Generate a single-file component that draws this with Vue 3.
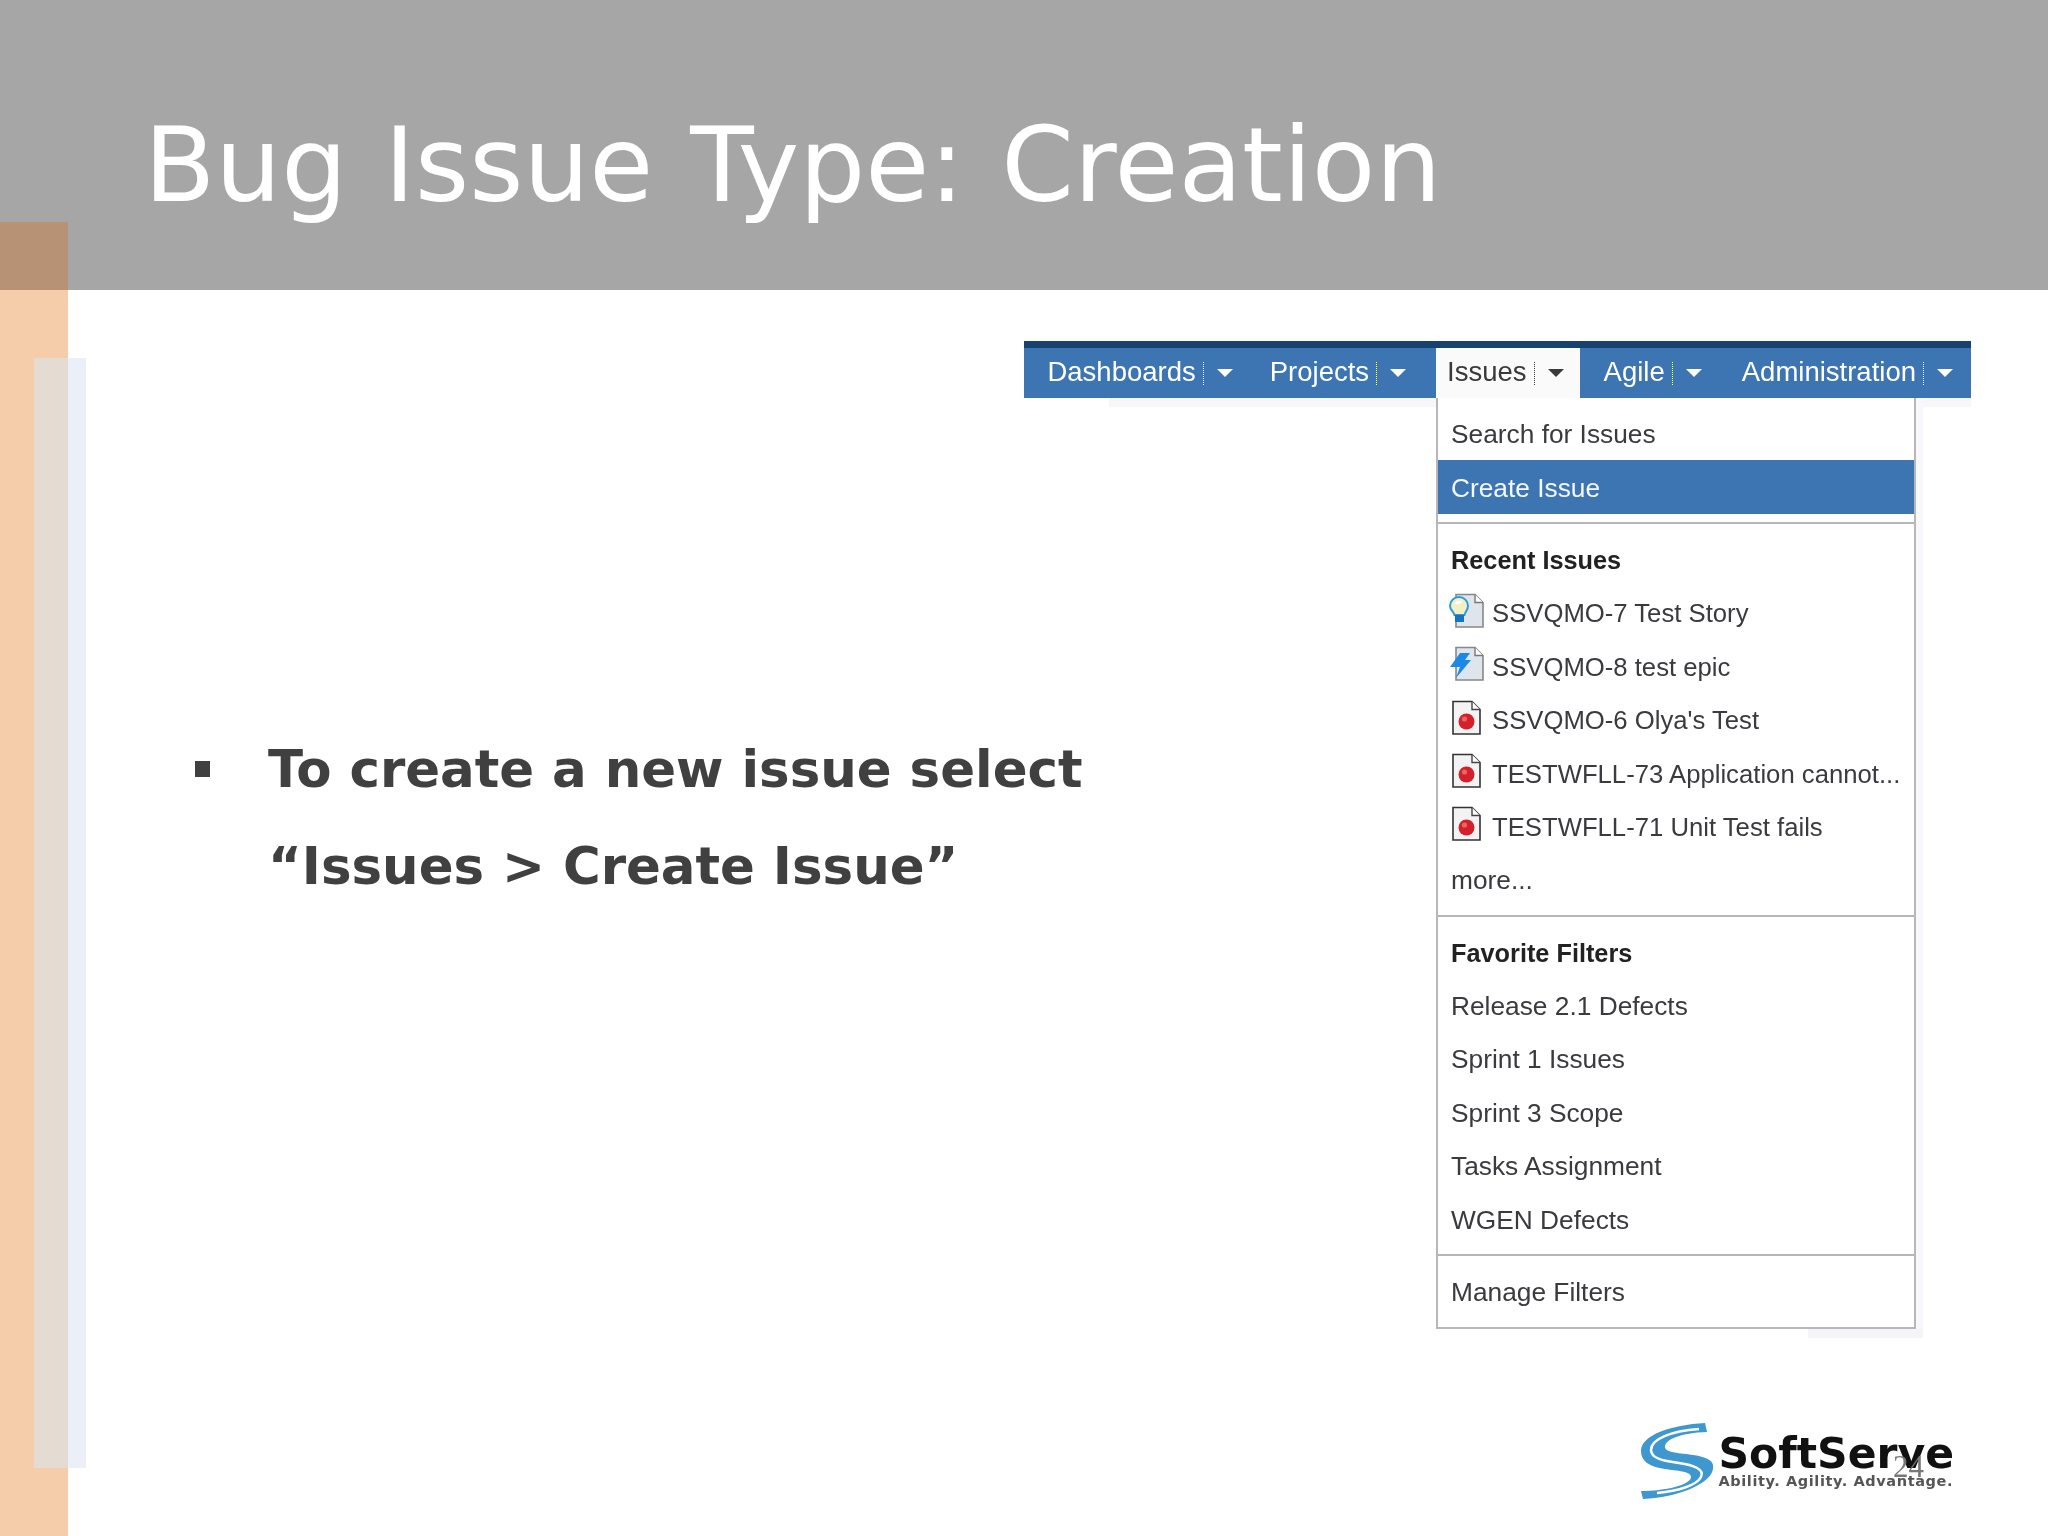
<script setup>
const tabs = [
  { name: 'Dashboards', cls: 'dash' },
  { name: 'Projects', cls: 'proj' },
  { name: 'Issues', cls: 'active' },
  { name: 'Agile', cls: 'agile' },
  { name: 'Administration', cls: 'admin' },
]
const recent = [
  { icon: 'story', text: 'SSVQMO-7 Test Story' },
  { icon: 'epic', text: 'SSVQMO-8 test epic' },
  { icon: 'bug', text: "SSVQMO-6 Olya's Test" },
  { icon: 'bug', text: 'TESTWFLL-73 Application cannot...' },
  { icon: 'bug', text: 'TESTWFLL-71 Unit Test fails' },
]
const filters = ['Release 2.1 Defects', 'Sprint 1 Issues', 'Sprint 3 Scope', 'Tasks Assignment', 'WGEN Defects']
</script>

<template>
  <div class="slide">
    <header class="head">
      <h1 class="title">Bug Issue Type: Creation</h1>
    </header>
    <div class="body">
      <aside class="rail">
        <div class="rail-cap"></div>
        <div class="rail-strip"></div>
      </aside>
      <main class="main">
        <nav class="nav">
          <div v-for="t in tabs" :key="t.name" class="tab" :class="t.cls">
            <span class="tab-label">{{ t.name }}</span>
            <span class="tab-sep"></span>
            <span class="tab-arrow"></span>
          </div>
        </nav>
        <div class="row">
          <div class="copy">
            <span class="bullet"></span>
            <p class="copy-text">To create a new issue select<br />“Issues &gt; Create Issue”</p>
          </div>
          <div class="side">
            <div class="menu">
              <section class="sec">
                <div class="item">Search for Issues</div>
                <div class="item selected">Create Issue</div>
              </section>
              <section class="sec">
                <div class="item heading">Recent Issues</div>
                <div v-for="r in recent" :key="r.text" class="item issue">
                  <svg class="ico" viewBox="0 0 36 36" width="36" height="36">
                    <template v-if="r.icon === 'bug'">
                      <path d="M4 1.5H23L31 9.5V34H4Z" fill="#f3f3f3" stroke="#333" stroke-width="1.6" />
                      <path d="M23 1.5V9.5H31" fill="#fff" stroke="#444" stroke-width="1.4" />
                      <circle cx="17.5" cy="21.5" r="8" fill="#d3202a" />
                      <circle cx="15.5" cy="19" r="2.6" fill="#ec6460" />
                    </template>
                    <template v-else-if="r.icon === 'story'">
                      <path d="M7 1.5H26L34 9.5V34H7Z" fill="#dfe5ec" stroke="#888" stroke-width="1.6" />
                      <path d="M26 1.5V9.5H34" fill="#fff" stroke="#777" stroke-width="1.4" />
                      <path d="M10 4C15 4 19 8 19 13C19 17 16 19 15.5 22H5.5C5 19 1 17 1 13C1 8 5 4 10 4Z" fill="#f2f0c4" stroke="#2f9bd8" stroke-width="2" />
                      <path d="M6 22H15V29H6Z" fill="#1673c4" />
                      <path d="M7 11C8 9 11 9 12 10" fill="none" stroke="#ffffff" stroke-width="3" />
                    </template>
                    <template v-else>
                      <path d="M7 1.5H26L34 9.5V34H7Z" fill="#dfe5ec" stroke="#888" stroke-width="1.6" />
                      <path d="M26 1.5V9.5H34" fill="#fff" stroke="#777" stroke-width="1.4" />
                      <path d="M11 7H21L16 14H22L7 32L11 21H1Z" fill="#1a8ae6" />
                    </template>
                  </svg>
                  <span>{{ r.text }}</span>
                </div>
                <div class="item">more...</div>
              </section>
              <section class="sec">
                <div class="item heading">Favorite Filters</div>
                <div v-for="f in filters" :key="f" class="item">{{ f }}</div>
              </section>
              <section class="sec">
                <div class="item">Manage Filters</div>
              </section>
            </div>
            <div class="logo">
              <svg class="logo-mark" viewBox="0 0 74 76" width="74" height="76">
                <path d="M64 0L66 9C40 10 24 16 24 24C24 30 40 30 52 32C66 34 74 38 72 46C70 60 40 74 2 76L0 68C24 68 50 62 50 54C50 48 36 48 24 46C8 44 0 38 0 28C0 12 30 2 64 0Z" fill="#3f97cf" />
                <path d="M58 6C30 8 10 16 10 27C10 36 24 38 38 40C52 42 64 46 60 54C56 62 38 68 16 70" fill="none" stroke="#fff" stroke-width="2.5" />
              </svg>
              <div class="logo-words">
                <div class="logo-name">SoftServe</div>
                <div class="logo-tag">Ability. Agility. Advantage.</div>
              </div>
              <span class="page-no">24</span>
            </div>
          </div>
        </div>
      </main>
    </div>
  </div>
</template>

<style scoped>
.slide {
  width: 2048px;
  height: 1536px;
  overflow: hidden;
  background: #fff;
  display: flex;
  flex-direction: column;
  font-family: "Liberation Sans", Arial, sans-serif;
}
.head {
  height: 290px;
  flex: none;
  box-sizing: border-box;
  background: #a6a6a6;
  padding: 100px 0 0 144px;
}
.title {
  margin: 0;
  font: 400 104px/130px "DejaVu Sans", sans-serif;
  word-spacing: 4px;
  color: #fff;
  white-space: nowrap;
}
.body {
  flex: 1;
  display: flex;
  min-height: 0;
}
.rail {
  width: 68px;
  flex: none;
  background: #f6cdaa;
  position: relative;
}
.rail-cap {
  position: absolute;
  left: 0;
  top: -68px;
  width: 68px;
  height: 68px;
  background: #b89274;
}
.rail-strip {
  position: absolute;
  left: 34px;
  top: 68px;
  width: 52px;
  height: 1110px;
  background: linear-gradient(to right, #e4dbd3 0 34px, #ebeff8 34px);
}
.main {
  flex: 1;
  min-width: 0;
  display: flex;
  flex-direction: column;
  padding-top: 51px;
}
.nav {
  position: relative;
  align-self: flex-end;
  margin-right: 77px;
  height: 50px;
  display: flex;
  background: #3d75b3;
  border-top: 7px solid #17426f;
  color: #fff;
  font-size: 27.5px;
  filter: blur(0.4px);
}
.nav::after {
  content: "";
  position: absolute;
  left: 85px;
  right: 0;
  bottom: -9px;
  height: 9px;
  background: #f7f7fa;
}
.tab {
  display: flex;
  align-items: center;
  flex: none;
}
.tab-label { margin-top: -2px; }
.dash { padding: 0 18px 0 23px; }
.proj { padding: 0 30px 0 19px; }
.active { padding: 0 16px 0 11px; background: #fafafa; color: #3a3a3a; }
.agile { padding: 0 18px 0 24px; }
.admin { padding: 0 18px 0 22px; }
.tab-sep {
  height: 23px;
  margin-left: 7px;
  border-left: 1px dotted currentColor;
}
.tab-arrow {
  margin-left: 13px;
  width: 0;
  height: 0;
  border-left: 8px solid transparent;
  border-right: 8px solid transparent;
  border-top: 8px solid currentColor;
}
.row {
  display: flex;
  flex: 1;
  justify-content: space-between;
  min-height: 0;
}
.copy {
  display: flex;
  align-items: flex-start;
  padding: 323px 0 0 127px;
}
.bullet {
  width: 15px;
  height: 16px;
  margin-top: 40px;
  background: #404040;
  flex: none;
}
.copy-text {
  margin: 0 0 0 58px;
  font: 700 51.4px/97px "DejaVu Sans", sans-serif;
  color: #404040;
  white-space: nowrap;
}
.side {
  display: flex;
  flex-direction: column;
  align-items: flex-end;
  padding-right: 94px;
}
.menu {
  position: relative;
  width: 480px;
  margin-right: 38px;
  box-sizing: border-box;
  border: 2px solid #b7b7bb;
  border-top: 0;
  background: #fff;
  color: #3a3a3f;
  font-size: 26.3px;
  box-shadow: 7px 0 0 #f8f7fb;
  filter: blur(0.4px);
}
.menu::after {
  content: "";
  position: absolute;
  right: -9px;
  bottom: -11px;
  width: 115px;
  height: 9px;
  background: #f5f4f8;
}
.sec {
  padding: 9px 0 8px;
  border-bottom: 2px solid #b7b7bb;
}
.sec:last-child { border-bottom: 0; padding-bottom: 8.5px; }
.item {
  height: 53.4px;
  box-sizing: border-box;
  padding: 2px 0 0 13px;
  display: flex;
  align-items: center;
  white-space: nowrap;
}
.selected { background: #3d75b3; color: #f4f7fb; }
.heading { font-weight: 700; color: #222; font-size: 25.3px; }
.issue { padding-left: 11px; font-size: 25.7px; }
.ico { flex: none; margin-right: 7px; margin-top: -6px; }
.logo {
  position: relative;
  display: flex;
  align-items: flex-start;
  margin-top: 96px;
  filter: blur(0.5px);
}
.logo-mark { flex: none; margin-right: 3px; margin-top: -2px; }
.logo-words { padding-top: 8px; }
.logo-name {
  font: 700 42.5px/42px "DejaVu Sans", sans-serif;
  color: #111;
  white-space: nowrap;
}
.logo-tag {
  margin-top: -2px;
  font: 700 14.5px/16px "DejaVu Sans", sans-serif;
  letter-spacing: 0.6px;
  color: #555;
  white-space: nowrap;
}
.page-no {
  position: absolute;
  right: 30px;
  top: 24px;
  font: 400 31px/36px "Liberation Serif", serif;
  color: #777;
}
</style>
